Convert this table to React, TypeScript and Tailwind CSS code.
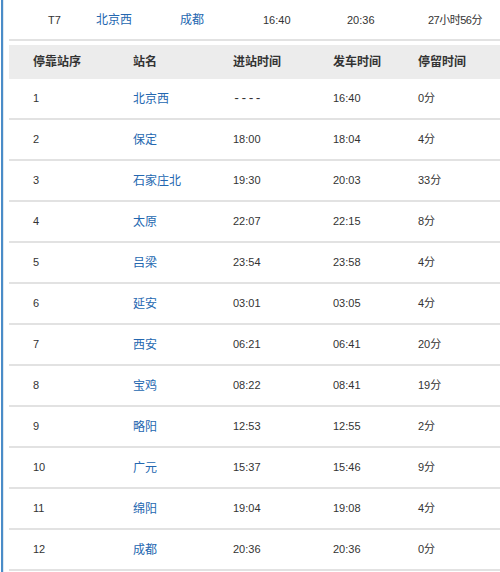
import React from "react";

interface Stop {
  no: number;
  name: string;
  arrive: string;
  depart: string;
  stay: string;
}

const stops: Stop[] = [
  { no: 1, name: "北京西", arrive: "----", depart: "16:40", stay: "0分" },
  { no: 2, name: "保定", arrive: "18:00", depart: "18:04", stay: "4分" },
  { no: 3, name: "石家庄北", arrive: "19:30", depart: "20:03", stay: "33分" },
  { no: 4, name: "太原", arrive: "22:07", depart: "22:15", stay: "8分" },
  { no: 5, name: "吕梁", arrive: "23:54", depart: "23:58", stay: "4分" },
  { no: 6, name: "延安", arrive: "03:01", depart: "03:05", stay: "4分" },
  { no: 7, name: "西安", arrive: "06:21", depart: "06:41", stay: "20分" },
  { no: 8, name: "宝鸡", arrive: "08:22", depart: "08:41", stay: "19分" },
  { no: 9, name: "略阳", arrive: "12:53", depart: "12:55", stay: "2分" },
  { no: 10, name: "广元", arrive: "15:37", depart: "15:46", stay: "9分" },
  { no: 11, name: "绵阳", arrive: "19:04", depart: "19:08", stay: "4分" },
  { no: 12, name: "成都", arrive: "20:36", depart: "20:36", stay: "0分" },
];

const font = { fontFamily: '"Liberation Sans", "Noto Sans CJK SC", sans-serif' };

const App: React.FC = () => {
  return (
    <div
      className="w-[500px] h-[572px] bg-white flex overflow-hidden text-[11px] text-[#333]"
      style={font}
    >
      {/* left frame line */}
      <div className="w-px" />
      <div className="w-[2px] bg-[#4a8cc8]" />
      <div className="w-px bg-[#dfe8f0]" />
      <div className="w-[5px]" />

      <div className="flex-1 flex flex-col">
        {/* train summary */}
        <div className="h-[41px] border-b-2 border-[#e2e2e2] grid grid-cols-[48px_84px_83px_84px_81px_1fr] items-center pl-[39px] pt-px">
          <div>T7</div>
          <div className="text-[#2467b0] text-[12px]">北京西</div>
          <div className="text-[#2467b0] text-[12px]">成都</div>
          <div>16:40</div>
          <div>20:36</div>
          <div className="tracking-[-0.5px]">27小时56分</div>
        </div>

        {/* header */}
        <div className="mt-[4px] h-[34px] bg-[#ececec] grid grid-cols-[100px_100px_100px_85px_1fr] items-center pl-[24px] font-bold text-[12px] text-[#333]">
          <div>停靠站序</div>
          <div>站名</div>
          <div>进站时间</div>
          <div>发车时间</div>
          <div>停留时间</div>
        </div>

        {/* stops */}
        {stops.map((s) => (
          <div
            key={s.no}
            className="h-[41px] border-b-2 border-[#e2e2e2] grid grid-cols-[100px_100px_100px_85px_1fr] items-center pl-[24px]"
          >
            <div>{s.no}</div>
            <div className="text-[#2467b0] text-[12px]">{s.name}</div>
            {s.arrive === "----" ? (
              <div className="font-['Liberation_Mono',monospace] text-[12px]">{s.arrive}</div>
            ) : (
              <div>{s.arrive}</div>
            )}
            <div>{s.depart}</div>
            <div>{s.stay}</div>
          </div>
        ))}
      </div>
    </div>
  );
};

export default App;
